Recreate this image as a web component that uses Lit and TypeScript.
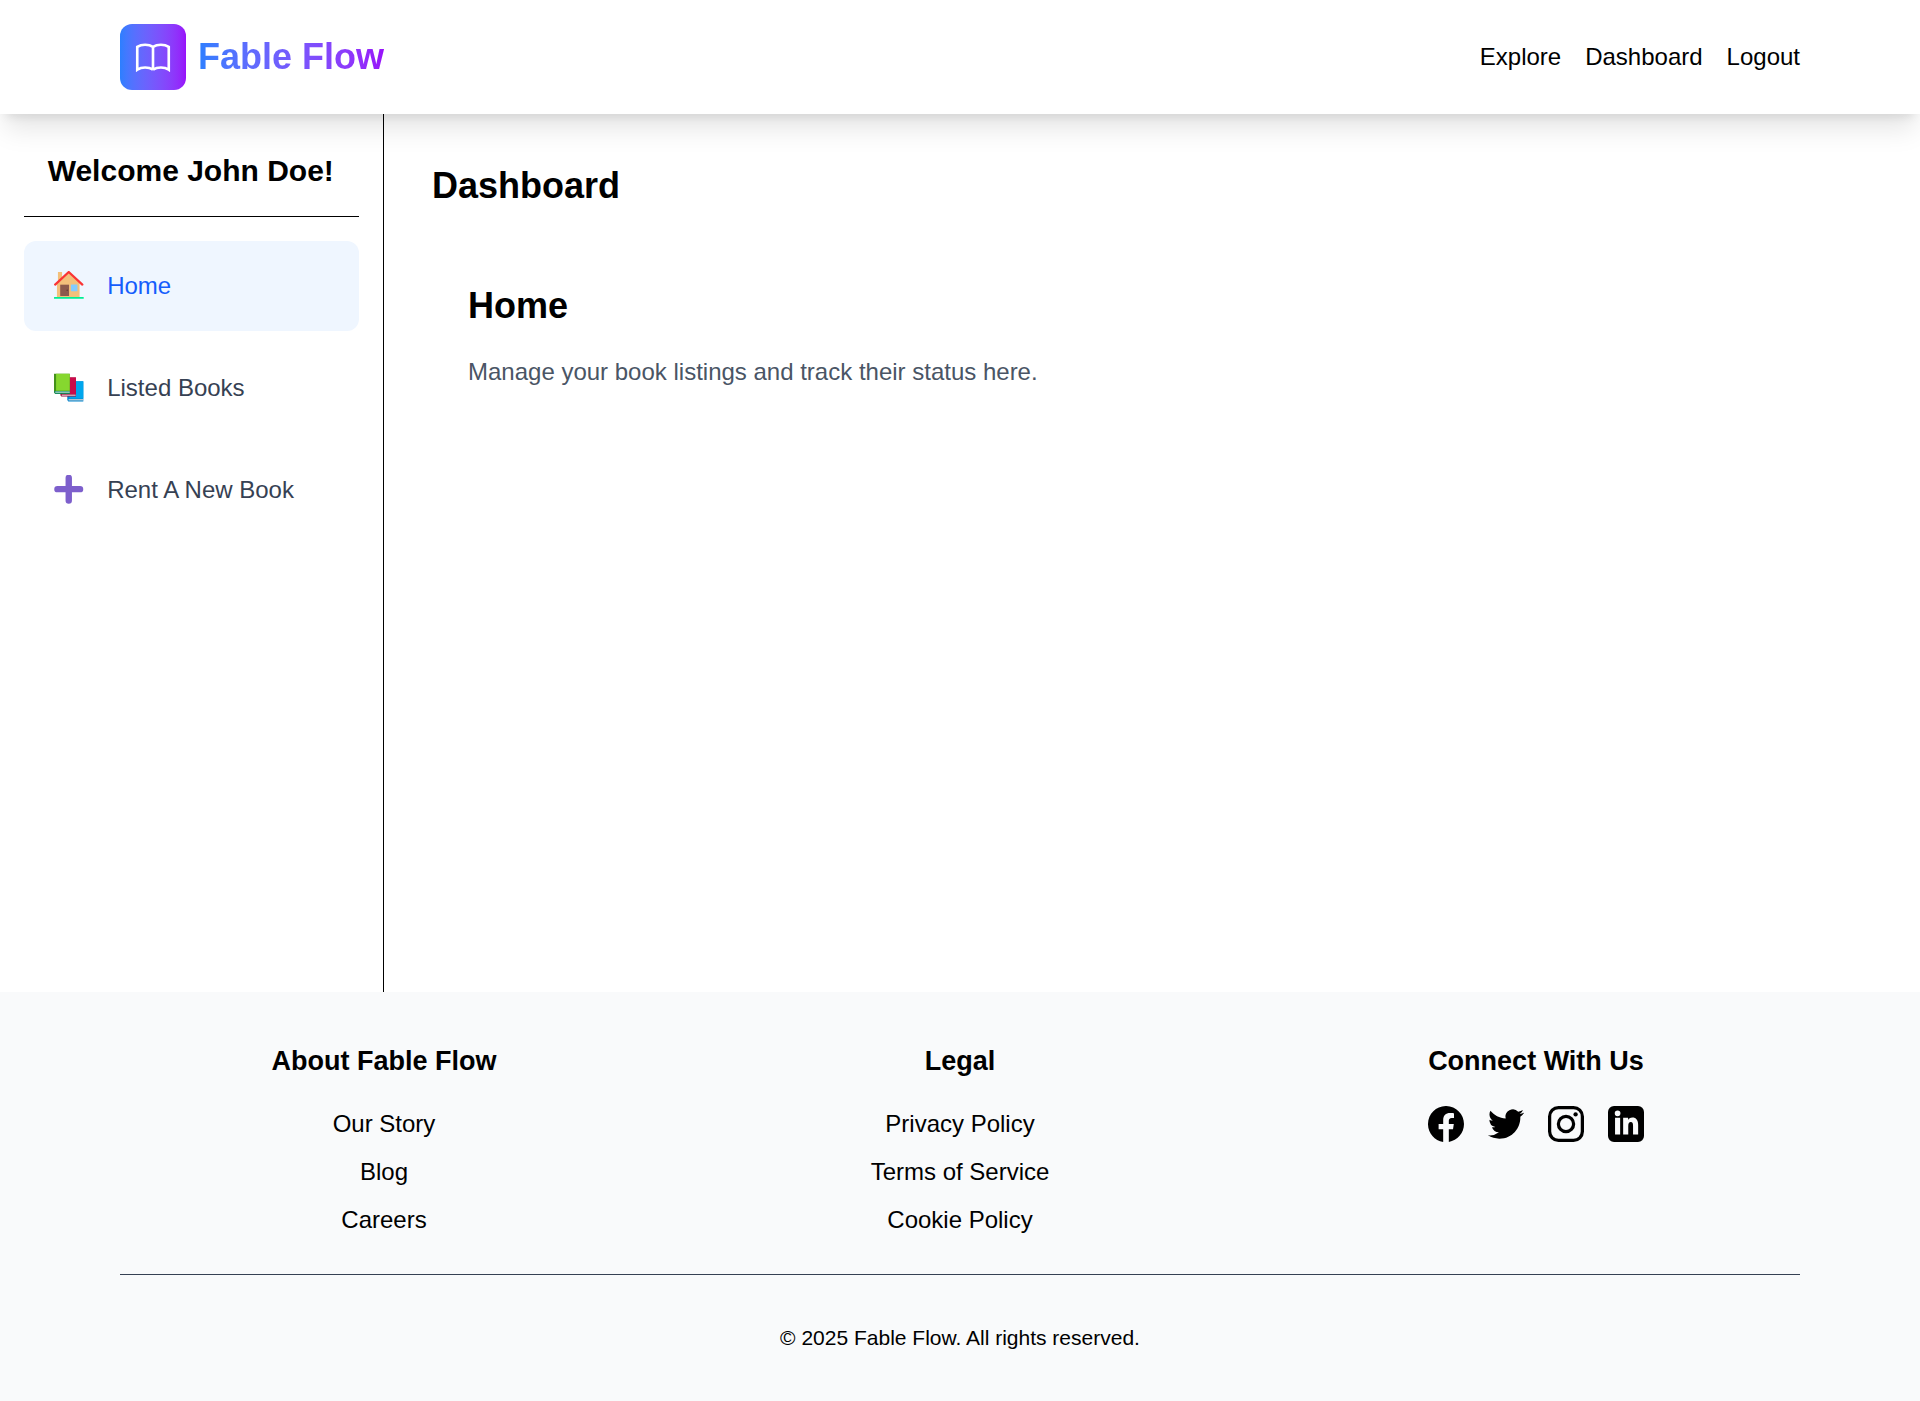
import { LitElement, html, css, svg } from "lit";
import { customElement, state } from "lit/decorators.js";

const home = svg`<svg class="glyph" viewBox="0 .6 30 30">
  <path fill="#f3c07b" d="M4 1.5h4.2v6L15 1.8 26 12v15H3V12h1z"/>
  <path fill="none" stroke="#fa3535" stroke-width="2.3" stroke-linecap="round" stroke-linejoin="round" d="M1.2 14.4 15 1.6 28.8 14.4"/>
  <path fill="#8c5a4c" d="M6.3 14.5h9V26h-9z"/>
  <circle cx="13.4" cy="20.2" r=".7" fill="#5a3530"/>
  <rect x="17.2" y="14.3" width="6.6" height="6.8" rx=".6" fill="#83cbff"/>
  <path fill="#00ef92" d="M.9 27h28.2a.8.8 0 0 1 .6 1.9H.3A1 1 0 0 1 .9 27z"/>
</svg>`;

const books = svg`<svg class="glyph" viewBox="0 0 30 30">
  <path fill="#0084ce" d="M13.5 8.5H29.8V29H14.6q-1.1-1-1.1-2z"/>
  <path fill="#00a6ed" d="M15.6 8.5H29.8V26H15.6z"/>
  <path fill="#d3d3d3" d="M14.8 26.6H29.6v1.3H14.8z"/>
  <path fill="#990838" d="M6.5 4.5H22.3V24H7.6q-1.1-1-1.1-2z"/>
  <path fill="#ca0b4a" d="M8.5 4.5H22.3v17H8.5z"/>
  <path fill="#e6dfe1" d="M7.8 22H22v1.1H7.8z"/>
  <path fill="#44911b" d="M0 .8H16V21H1.2Q0 20.4 0 19z"/>
  <path fill="#86d72f" d="M2.1 .8H16V18H2.1z"/>
  <path fill="#008463" d="M.4 18.2H16V21H1.2Q0 20 .4 18.2z"/>
  <path fill="#d3e6dc" d="M1.3 18.9H16V20H1.3z"/>
</svg>`;

const plus = svg`<svg class="glyph" viewBox="0 .6 30 30">
  <path fill="none" stroke="#7d5fcc" stroke-width="6.5" stroke-linecap="round" d="M15 3.5V26.5M3.5 15H26.5"/>
</svg>`;

const bookOpen = svg`<svg class="mark" viewBox="0 0 24 24" fill="none" stroke="#fff" stroke-width="1.5">
  <path d="M12 6.253v13m0-13C10.832 5.477 9.246 5 7.5 5S4.168 5.477 3 6.253v13C4.168 18.477 5.754 18 7.5 18s3.332.477 4.5 1.253m0-13C13.168 5.477 14.754 5 16.5 5c1.747 0 3.332.477 4.5 1.253v13C19.832 18.477 18.247 18 16.5 18c-1.746 0-3.332.477-4.5 1.253"/>
</svg>`;

const socials = [
  svg`<svg class="social" viewBox="0 0 16 16"><path d="M16 8.049c0-4.446-3.582-8.05-8-8.05C3.58 0-.002 3.603-.002 8.05c0 4.017 2.926 7.347 6.75 7.951v-5.625h-2.03V8.05H6.75V6.275c0-2.017 1.195-3.131 3.022-3.131.876 0 1.791.157 1.791.157v1.98h-1.009c-.993 0-1.303.621-1.303 1.258v1.51h2.218l-.354 2.326H9.25V16c3.824-.604 6.75-3.934 6.75-7.951"/></svg>`,
  svg`<svg class="social" viewBox="0 0 24 24"><path d="M23.953 4.57a10 10 0 0 1-2.825.775 4.958 4.958 0 0 0 2.163-2.723 9.99 9.99 0 0 1-3.127 1.184 4.92 4.92 0 0 0-8.384 4.482C7.69 8.095 4.067 6.13 1.64 3.162a4.822 4.822 0 0 0-.666 2.475c0 1.71.87 3.213 2.188 4.096a4.904 4.904 0 0 1-2.228-.616v.06a4.923 4.923 0 0 0 3.946 4.827 4.996 4.996 0 0 1-2.212.085 4.936 4.936 0 0 0 4.604 3.417 9.867 9.867 0 0 1-6.102 2.105c-.39 0-.779-.023-1.17-.067a13.995 13.995 0 0 0 7.557 2.209c9.053 0 13.998-7.496 13.998-13.985 0-.21 0-.42-.015-.63A9.935 9.935 0 0 0 24 4.59z"/></svg>`,
  svg`<svg class="social" viewBox="0 0 24 24"><rect x="1.08" y="1.08" width="21.84" height="21.84" rx="5.9" fill="none" stroke="#000" stroke-width="2.16"/><circle cx="12" cy="12" r="5.08" fill="none" stroke="#000" stroke-width="2.16"/><circle cx="18.4" cy="5.6" r="1.44"/></svg>`,
  svg`<svg class="social" viewBox="0 0 24 24"><path fill-rule="evenodd" d="M4 0H20a4 4 0 0 1 4 4V20a4 4 0 0 1-4 4H4a4 4 0 0 1-4-4V4a4 4 0 0 1 4-4zM4.7 7.9V19H8.1V7.9zM6.4 3a1.9 1.9 0 1 0 0 3.8 1.9 1.9 0 0 0 0-3.8zM10.1 7.9V19h3.4V13.3c0-1.6.5-2.6 1.7-2.6s1.5 1 1.5 2.6V19h3.4v-6.3c0-3.3-1.4-5-3.8-5-1.6 0-2.4.8-2.9 1.7V7.9z"/></svg>`,
];

@customElement("app-root")
export class AppRoot extends LitElement {
  static styles = css`
    :host { display: block; font: 24px/36px "Liberation Sans", Arial, sans-serif; color: #000; background: #fff; }
    * { box-sizing: border-box; }
    h1, h2, h3, p, ul { margin: 0; padding: 0; }
    .page { display: flex; flex-direction: column; height: 1401px; }
    .top { position: relative; z-index: 1; display: flex; align-items: center; justify-content: space-between; height: 114px; padding: 0 120px; background: #fff;
      box-shadow: 0 20px 25px -5px rgb(0 0 0 / .1), 0 8px 10px -6px rgb(0 0 0 / .1); }
    .brand { display: flex; align-items: center; gap: 12px; }
    .badge { display: grid; place-items: center; width: 66px; height: 66px; border-radius: 12px; background: linear-gradient(to right in oklab, #2b7fff, #9810fa); }
    .mark { width: 42px; height: 42px; }
    .name { font-size: 36px; line-height: 48px; font-weight: 700; color: transparent; background: linear-gradient(to right in oklab, #2b7fff, #9810fa); background-clip: text; -webkit-background-clip: text; }
    .nav { display: flex; gap: 24px; }
    .body { flex: 1; display: flex; }
    .side { width: 384px; padding: 24px; border-right: 1px solid #000; }
    .hello { height: 79px; padding: 12px 1.5px 0 0; border-bottom: 1px solid #000; margin-bottom: 24px; font-size: 30px; line-height: 41px; font-weight: 700; text-align: center; }
    .menu { display: flex; flex-direction: column; gap: 12px; }
    .item { display: flex; align-items: center; gap: 23.7px; height: 90px; padding: 0 30px; border-radius: 12px; color: #364153; }
    .item.on { background: #eff6ff; color: #155dfc; }
    .glyph { display: block; width: 29.5px; height: 29.5px; }
    .main { flex: 1; padding: 48px; }
    .title { font-size: 36px; line-height: 48px; font-weight: 700; }
    .panel { padding: 72px 36px 0; }
    .lead { margin-top: 24px; color: #4a5565; }
    .foot { height: 409px; padding: 48px 120px 0; background: #f9fafb; text-align: center; }
    .cols { display: grid; grid-template-columns: repeat(3, 1fr); gap: 48px; height: 234px; }
    .head { font-size: 27px; line-height: 42px; margin-bottom: 24px; font-weight: 700; }
    .links { display: flex; flex-direction: column; gap: 12px; list-style: none; }
    .socials { display: flex; justify-content: center; gap: 24px; }
    .social { display: block; width: 36px; height: 36px; }
    .copy { border-top: 1px solid #364153; padding-top: 48px; font-size: 21px; line-height: 30px; }
  `;

  @state() private active = "Home";

  private items = [
    { label: "Home", icon: home },
    { label: "Listed Books", icon: books },
    { label: "Rent A New Book", icon: plus },
  ];

  private column(title: string, links: string[]) {
    return html`<section><h3 class="head">${title}</h3>
      <ul class="links">${links.map((l) => html`<li>${l}</li>`)}</ul></section>`;
  }

  render() {
    return html`<div class="page">
      <header class="top">
        <div class="brand"><span class="badge">${bookOpen}</span><span class="name">Fable Flow</span></div>
        <nav class="nav"><span>Explore</span><span>Dashboard</span><span>Logout</span></nav>
      </header>
      <div class="body">
        <aside class="side">
          <h2 class="hello">Welcome John Doe!</h2>
          <nav class="menu">${this.items.map((i) => html`
            <div class="item ${i.label === this.active ? "on" : ""}" @click=${() => (this.active = i.label)}>${i.icon}<span>${i.label}</span></div>`)}
          </nav>
        </aside>
        <main class="main">
          <h1 class="title">Dashboard</h1>
          <section class="panel">
            <h2 class="title">${this.active}</h2>
            <p class="lead">Manage your book listings and track their status here.</p>
          </section>
        </main>
      </div>
      <footer class="foot">
        <div class="cols">
          ${this.column("About Fable Flow", ["Our Story", "Blog", "Careers"])}
          ${this.column("Legal", ["Privacy Policy", "Terms of Service", "Cookie Policy"])}
          <section><h3 class="head">Connect With Us</h3><div class="socials">${socials}</div></section>
        </div>
        <p class="copy">© 2025 Fable Flow. All rights reserved.</p>
      </footer>
    </div>`;
  }
}
